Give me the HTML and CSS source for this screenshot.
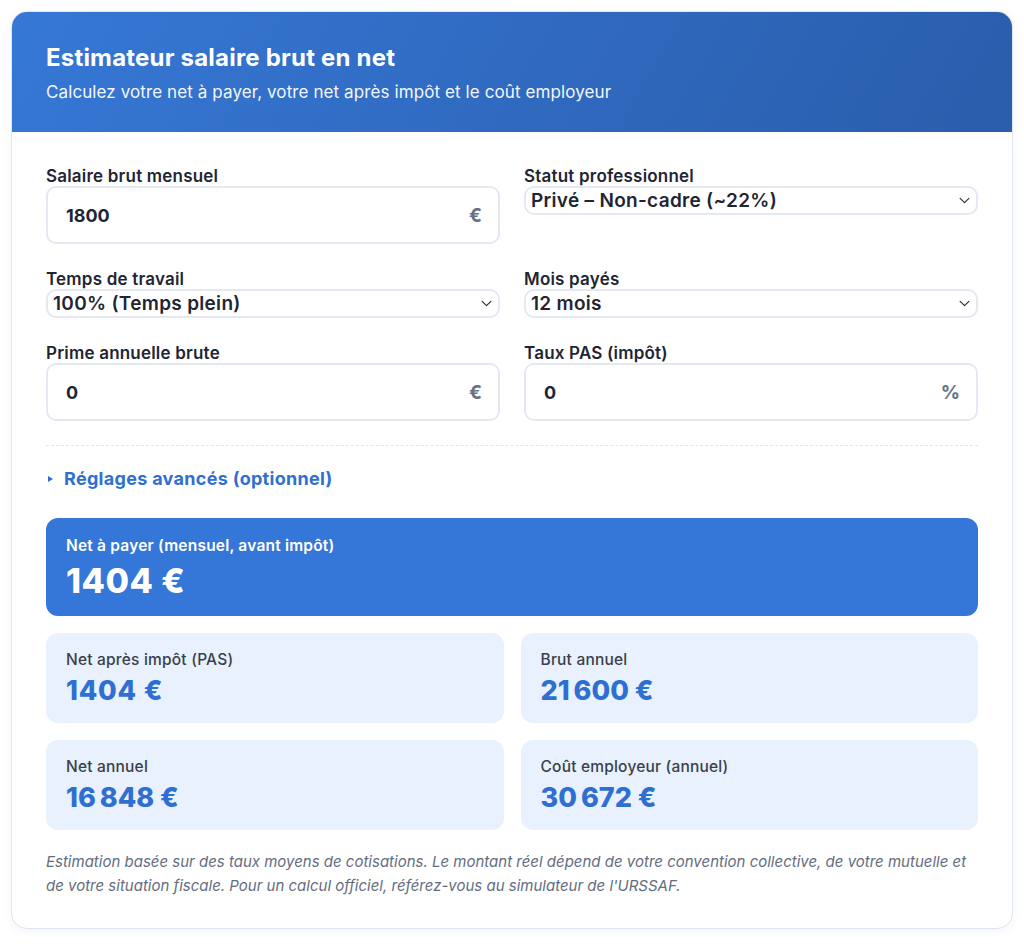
FILE: index.html
```html
<!DOCTYPE html>
<html lang="fr">
<head>
  <meta charset="UTF-8" />
  <title>Estimateur salaire brut en net</title>
  <link rel="stylesheet" href="styles.css">
</head>
<body>

  <div class="calc-card">
    <header class="calc-header">
      <h1>Estimateur salaire brut en net</h1>
      <p>Calculez votre net à payer, votre net après impôt et le coût employeur</p>
    </header>

    <div class="calc-body">
      <form class="fields" id="salaryForm">
        <div class="field">
          <label for="brut">Salaire brut mensuel</label>
          <div class="input-wrap">
            <input type="text" id="brut" value="1800" />
            <span class="unit">€</span>
          </div>
        </div>

        <div class="field">
          <label for="statut">Statut professionnel</label>
          <div class="select-wrap">
            <select id="statut">
              <option>Privé – Non-cadre (~22%)</option>
              <option>Privé – Cadre (~25%)</option>
              <option>Fonction publique (~15%)</option>
            </select>
            <svg class="chevron" viewBox="0 0 12 8" width="11" height="7"><path d="M1 1.5l5 5 5-5" fill="none" stroke="#333" stroke-width="1.4" stroke-linecap="round" stroke-linejoin="round"/></svg>
          </div>
        </div>

        <div class="field">
          <label for="temps">Temps de travail</label>
          <div class="select-wrap">
            <select id="temps">
              <option>100% (Temps plein)</option>
              <option>80%</option>
              <option>50% (Mi-temps)</option>
            </select>
            <svg class="chevron" viewBox="0 0 12 8" width="11" height="7"><path d="M1 1.5l5 5 5-5" fill="none" stroke="#333" stroke-width="1.4" stroke-linecap="round" stroke-linejoin="round"/></svg>
          </div>
        </div>

        <div class="field">
          <label for="mois">Mois payés</label>
          <div class="select-wrap">
            <select id="mois">
              <option>12 mois</option>
              <option>13 mois</option>
              <option>14 mois</option>
            </select>
            <svg class="chevron" viewBox="0 0 12 8" width="11" height="7"><path d="M1 1.5l5 5 5-5" fill="none" stroke="#333" stroke-width="1.4" stroke-linecap="round" stroke-linejoin="round"/></svg>
          </div>
        </div>

        <div class="field">
          <label for="prime">Prime annuelle brute</label>
          <div class="input-wrap">
            <input type="text" id="prime" value="0" />
            <span class="unit">€</span>
          </div>
        </div>

        <div class="field">
          <label for="pas">Taux PAS (impôt)</label>
          <div class="input-wrap">
            <input type="text" id="pas" value="0" />
            <span class="unit">%</span>
          </div>
        </div>
      </form>

      <details class="advanced">
        <summary>Réglages avancés (optionnel)</summary>
      </details>

      <div class="result-main">
        <span class="result-label">Net à payer (mensuel, avant impôt)</span>
        <span class="result-value">1404 €</span>
      </div>

      <div class="result-grid">
        <div class="result-box">
          <span class="result-label">Net après impôt (PAS)</span>
          <span class="result-value">1404 €</span>
        </div>
        <div class="result-box">
          <span class="result-label">Brut annuel</span>
          <span class="result-value">21&#8239;600 €</span>
        </div>
        <div class="result-box">
          <span class="result-label">Net annuel</span>
          <span class="result-value">16&#8239;848 €</span>
        </div>
        <div class="result-box">
          <span class="result-label">Coût employeur (annuel)</span>
          <span class="result-value">30&#8239;672 €</span>
        </div>
      </div>

      <p class="disclaimer">Estimation basée sur des taux moyens de cotisations. Le montant réel dépend de votre convention collective, de votre mutuelle et de votre situation fiscale. Pour un calcul officiel, référez-vous au simulateur de l'URSSAF.</p>
    </div>
  </div>

</body>
</html>
```

FILE: styles.css
```css
* {
  box-sizing: border-box;
}

body {
  margin: 0;
  padding: 11px;
  font-family: Inter, 'Noto Sans', sans-serif;
  background: #fff;
  color: #1f2533;
}

.calc-card {
  border: 1px solid #dfe6f2;
  border-radius: 16px;
  overflow: hidden;
  background: #fff;
  box-shadow: 0 2px 8px rgba(30, 60, 120, 0.05);
}

.calc-header {
  background: linear-gradient(120deg, #3678d6, #2a5dab);
  color: #fff;
  padding: 32px 34px 30px;
  height: 120px;
}

.calc-header h1 {
  margin: 0;
  font-size: 24px;
  font-weight: 700;
  letter-spacing: 0.2px;
  line-height: 28px;
}

.calc-header p {
  margin: 10px 0 0;
  font-size: 17px;
  line-height: 20px;
  letter-spacing: 0.1px;
  opacity: 0.95;
}

.calc-body {
  padding: 33px 34px 30px;
}

.fields {
  display: grid;
  grid-template-columns: 1fr 1fr;
  column-gap: 24px;
  row-gap: 24px;
  align-items: start;
}

.field label {
  display: block;
  font-size: 17px;
  font-weight: 600;
  line-height: 20px;
  letter-spacing: 0.2px;
  margin: 1px 0 0;
  color: #1f2533;
}

.input-wrap {
  display: flex;
  align-items: center;
  height: 58px;
  border: 2px solid #e3e8f1;
  border-radius: 10px;
  padding: 0 16px 0 18px;
}

.input-wrap input {
  flex: 1;
  min-width: 0;
  border: none;
  outline: none;
  font-family: inherit;
  font-size: 18px;
  font-weight: 700;
  color: #1f2533;
  background: transparent;
  padding: 0;
}

.unit {
  font-size: 19px;
  font-weight: 700;
  color: #667085;
}

.select-wrap {
  position: relative;
}

.select-wrap select {
  appearance: none;
  -webkit-appearance: none;
  width: 100%;
  height: 29px;
  border: 2px solid #e3e8f1;
  border-radius: 10px;
  background: #fff;
  font-family: inherit;
  font-size: 19px;
  font-weight: 600;
  letter-spacing: 0.3px;
  color: #1f2533;
  padding: 0 30px 0 5px;
}

.chevron {
  position: absolute;
  right: 8px;
  top: 11px;
  pointer-events: none;
}

.advanced {
  margin-top: 24px;
  border-top: 1px dashed #e1e6ef;
  padding-top: 22px;
}

.advanced summary {
  color: #2f6fd2;
  font-size: 18px;
  font-weight: 700;
  line-height: 22px;
  letter-spacing: 0.3px;
  cursor: pointer;
  list-style: none;
  display: flex;
  align-items: center;
}

.advanced summary::before {
  content: "";
  border-left: 5px solid #2f6fd2;
  border-top: 3.5px solid transparent;
  border-bottom: 3.5px solid transparent;
  margin: 0 11px 0 2px;
}

.result-main {
  margin-top: 28px;
  background: #3576d9;
  border-radius: 12px;
  padding: 18px 20px 15px;
  color: #fff;
  display: flex;
  flex-direction: column;
}

.result-main .result-label {
  font-size: 15.5px;
  font-weight: 600;
  line-height: 20px;
  letter-spacing: 0.2px;
}

.result-main .result-value {
  font-size: 34px;
  font-weight: 800;
  line-height: 40px;
  letter-spacing: 0.5px;
  margin-top: 5px;
}

.result-grid {
  margin-top: 17px;
  display: grid;
  grid-template-columns: 1fr 1fr;
  gap: 17px;
}

.result-box {
  background: #e8f1fd;
  border-radius: 12px;
  height: 90px;
  padding: 17px 20px;
  display: flex;
  flex-direction: column;
}

.result-box .result-label {
  font-size: 15.5px;
  font-weight: 500;
  line-height: 20px;
  letter-spacing: 0.2px;
  color: #3a3f4b;
}

.result-box .result-value {
  font-size: 27px;
  font-weight: 800;
  line-height: 32px;
  letter-spacing: 0.8px;
  margin-top: 5px;
  color: #2f6fd2;
}

.disclaimer {
  margin: 20px 0 0;
  font-size: 15px;
  font-style: italic;
  line-height: 24px;
  color: #646d80;
}
```
